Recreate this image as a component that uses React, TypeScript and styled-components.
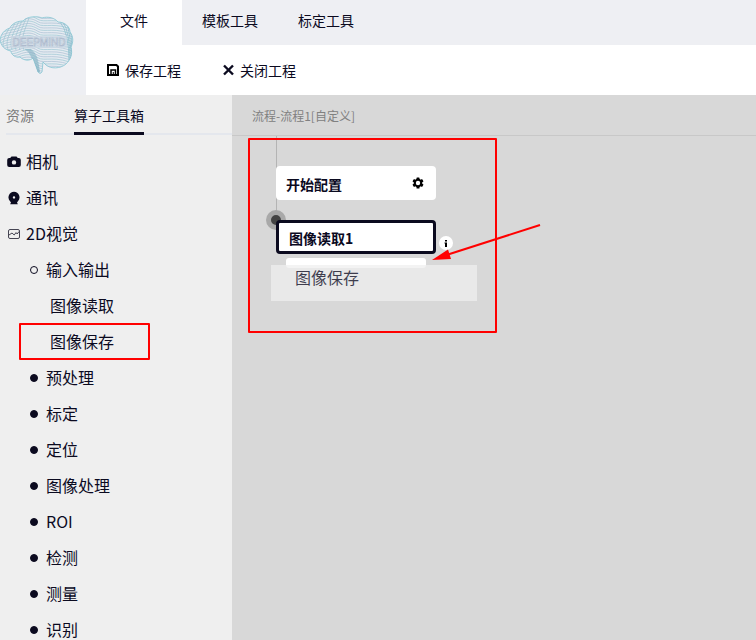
import React from "react";
import styled, { createGlobalStyle, css } from "styled-components";

const ink = "#0b0a1f";

const GlobalStyle = createGlobalStyle`
  *, *::before, *::after { box-sizing: border-box; }
  html, body, #root { height: 100%; }
  body {
    margin: 0;
    overflow: hidden;
    color: ${ink};
    font-family: "Noto Sans CJK SC", sans-serif;
    font-size: 14px;
  }
  button {
    margin: 0;
    padding: 0;
    border: 0;
    background: none;
    color: inherit;
    font: inherit;
    cursor: pointer;
  }
  ul { margin: 0; padding: 0; list-style: none; }
  svg { display: block; flex: none; }
`;

const Page = styled.div`
  display: flex;
  flex-direction: column;
  height: 100vh;
  background: #fff;
`;

const Header = styled.header`
  display: flex;
  flex: none;
`;

const LogoBox = styled.div`
  flex: none;
  width: 86px;
  background: #eeeff3;
`;

const HeaderMain = styled.div`
  flex: 1;
`;

const MenuTabs = styled.nav`
  display: flex;
  background: #eeeff3;
`;

const MenuTab = styled.button<{ $active?: boolean }>`
  width: 96px;
  height: 45px;
  padding-bottom: 6px;
  background: ${(p) => (p.$active ? "#fff" : "transparent")};
`;

const Toolbar = styled.div`
  display: flex;
  gap: 40px;
  height: 50px;
  padding: 0 20px;
`;

const ToolButton = styled.button`
  display: flex;
  align-items: center;
  gap: 5px;
`;

const Body = styled.div`
  display: flex;
  flex: 1;
  min-height: 0;
`;

const Sidebar = styled.aside`
  flex: none;
  width: 232px;
  overflow: hidden;
  background: #efefef;
`;

const SideTabs = styled.div`
  display: flex;
  gap: 40px;
  height: 40px;
  margin-left: 6px;
  box-shadow: inset 0 -2px #e4e7ed;
`;

const SideTab = styled.button<{ $active?: boolean }>`
  height: 40px;
  padding-top: 2px;
  color: ${(p) => (p.$active ? ink : "#7c7c7c")};
  border-bottom: 3px solid ${(p) => (p.$active ? ink : "transparent")};
`;

const Tree = styled.ul`
  padding-top: 9px;
`;

const TreeItem = styled.li`
  position: relative;
`;

const levels = [8, 30, 50];

const TreeButton = styled.button<{ $level: number }>`
  display: flex;
  align-items: center;
  width: 100%;
  height: 36px;
  gap: ${(p) => (p.$level === 0 ? 6 : 8)}px;
  padding-left: ${(p) => levels[p.$level]}px;
  font-size: 16px;
  line-height: 20px;
  text-align: left;
`;

const TreeLabel = styled.span`
  padding-bottom: 2px;
`;

const IconSlot = styled.span`
  display: flex;
  justify-content: center;
  width: 12px;
`;

const Dot = styled.span<{ $open?: boolean }>`
  width: 8px;
  height: 8px;
  border: 1px solid ${ink};
  border-radius: 50%;
  background: ${(p) => (p.$open ? "transparent" : ink)};
`;

const mark = css`
  position: absolute;
  border: 2px solid #f00;
  border-radius: 1px;
  pointer-events: none;
`;

const ItemMark = styled.span`
  ${mark}
  left: 19px;
  top: -1px;
  width: 131px;
  height: 37px;
`;

const Workspace = styled.main`
  display: flex;
  flex: 1;
  flex-direction: column;
  background: #d8d8d8;
`;

const FlowTitle = styled.div`
  height: 41px;
  padding: 0 20px;
  border-bottom: 1px solid #c8c8c8;
  color: #808080;
  font-size: 12px;
  line-height: 42px;
`;

const Canvas = styled.div`
  position: relative;
  flex: 1;
  overflow: hidden;
`;

const Wire = styled.div`
  position: absolute;
  left: 44px;
  top: 0;
  width: 1px;
  height: 84px;
  background: #b4b4b4;
`;

const Port = styled.div`
  position: absolute;
  left: 34px;
  top: 74px;
  width: 20px;
  height: 20px;
  border: 5px solid #a9a9a9;
  border-radius: 50%;
  background: #444;
`;

const FlowNode = styled.button<{ $top: number; $selected?: boolean }>`
  position: absolute;
  left: 44px;
  top: ${(p) => p.$top}px;
  display: flex;
  align-items: center;
  justify-content: space-between;
  width: 160px;
  height: 34px;
  padding: 0 12px 0 10px;
  border: ${(p) => (p.$selected ? `3px solid ${ink}` : "0")};
  border-radius: 4px;
  background: #fff;
  font-weight: 700;
`;

const NodeLabel = styled.span`
  padding-top: 2px;
`;

const InfoBadge = styled.button`
  position: absolute;
  left: 207px;
  top: 100px;
  display: flex;
  align-items: center;
  justify-content: center;
  width: 14px;
  height: 14px;
  border-radius: 50%;
  background: #fff;
`;

const DropSlot = styled.div`
  position: absolute;
  left: 54px;
  top: 122px;
  width: 140px;
  height: 10px;
  border-radius: 3px;
  background: #fff;
`;

const DragGhost = styled.div`
  position: absolute;
  left: 39px;
  top: 129px;
  width: 206px;
  height: 36px;
  padding-left: 24px;
  background: #efefef;
  font-size: 16px;
  line-height: 24px;
  opacity: 0.75;
`;

const FlowMark = styled.div`
  ${mark}
  left: 16px;
  top: 2px;
  width: 249px;
  height: 195px;
`;

const Arrow = styled.svg`
  position: absolute;
  left: 200px;
  top: 86px;
`;

const brain =
  "M0 40C1 34 4 30 10 28C12 23 18 21 23 21C27 16 38 16 42 18C48 16 55 18 58 22C65 22 70 27 70 32C74 37 73 43 71 47C73 55 70 60 66 64C60 69 51 69 46 65L43 62L42 72Q40 75 38 72L33 58C30 61 24 61 20 57C16 58 11 55 11 51C5 50 1 46 0 40Z";

function Logo() {
  const rows = Array.from({ length: 25 }, (_, i) => 15 + i * 2.4);
  const folds = Array.from({ length: 6 }, (_, i) => i);
  return (
    <svg width="86" height="95" viewBox="0 0 86 95" fill="none" role="img" aria-label="DEEPMIND">
      <defs>
        <clipPath id="brain">
          <path d={brain} />
        </clipPath>
      </defs>
      <path d={brain} fill="#dce8ef" fillOpacity="0.5" stroke="#8cc9d6" strokeWidth="0.9" />
      <g clipPath="url(#brain)" strokeWidth="0.7">
        {rows.map((y, i) => (
          <path
            key={y}
            stroke={i % 2 ? "#9cc6d3" : "#a9bfd2"}
            d={`M-2 ${y + 8}C6 ${y + 2} 12 ${y + 4} 19 ${y + 1}S32 ${y - 2} 38 ${y + 2}S56 ${y - 1} 76 ${y + 9}`}
          />
        ))}
        {folds.map((i) => (
          <path key={i} stroke="#9dc4d2" d={`M${4 + i * 4} 50C${i * 4} 38 ${10 + i * 3} 30 ${14 + i * 3} 18`} />
        ))}
        {folds.map((i) => (
          <path key={i} stroke="#86b4c6" d={`M${25 + i} 49C${32 + i} 53 ${33 + i} 62 ${37 + i * 0.5} 72`} />
        ))}
        {folds.slice(0, 4).map((i) => (
          <path key={i} stroke="#84bccb" d={`M${60 + i * 3} 22Q${69 + i} 32 ${69 + i} 62`} />
        ))}
      </g>
      <rect x="11" y="36" width="56" height="12" fill="#cbd7e3" fillOpacity="0.75" />
      <text
        x="39"
        y="46"
        textAnchor="middle"
        fill="#e9edf3"
        stroke="#a5b3c8"
        strokeWidth="0.5"
        fontFamily="Liberation Sans, sans-serif"
        fontSize="10"
      >
        DEEPMIND
      </text>
    </svg>
  );
}

const SaveIcon = () => (
  <svg width="14" height="14" viewBox="0 0 14 14" fill="none" stroke="#000" strokeWidth="2">
    <path d="M2 2h8.500L12 3.500V12H2z" />
    <path d="M5 12V7h4.500v5" strokeWidth="1.500" />
    <path d="M7.300 9v3" strokeWidth="1" />
  </svg>
);

const CloseIcon = () => (
  <svg width="14" height="14" viewBox="0 0 14 14" stroke={ink} strokeWidth="2.4">
    <path d="M3 2.500l9 9M12 2.500l-9 9" />
  </svg>
);

const CameraIcon = () => (
  <svg width="14" height="12" viewBox="0 0 14 12" fill={ink}>
    <path
      fillRule="evenodd"
      d="M4.500.5h5L10.800 2h1a2 2 0 0 1 2 2v5a2 2 0 0 1-2 2H2.200a2 2 0 0 1-2-2V4a2 2 0 0 1 2-2h1zM7 4.200a2.200 2.200 0 1 0 0 4.400 2.200 2.200 0 0 0 0-4.400z"
    />
  </svg>
);

const WebcamIcon = () => (
  <svg width="12" height="14" viewBox="0 0 12 14" fill={ink}>
    <path
      fillRule="evenodd"
      d="M6 .8a5.600 5.600 0 0 1 3.800 9.600l-.8.8.8 2H2.200l.8-2-.8-.8A5.600 5.600 0 0 1 6 .8zm0 4.400a1.200 1.200 0 1 0 0 2.400 1.200 1.200 0 0 0 0-2.400z"
    />
  </svg>
);

const PictureIcon = () => (
  <svg width="12" height="12" viewBox="0 0 12 12" fill="none" stroke="#454452">
    <rect x=".5" y="1.500" width="11" height="9" rx="1.500" />
    <path d="M1 7l3-2 2.200 2L8 4.600 9.200 6 11 3.500" />
  </svg>
);

const GearIcon = () => (
  <svg width="12" height="12" viewBox="0 0 12 12">
    <g fill="#000">
      <rect x="4.500" y="0.400" width="3" height="11.200" rx=".6" />
      <rect x="4.500" y="0.400" width="3" height="11.200" rx=".6" transform="rotate(60 6 6)" />
      <rect x="4.500" y="0.400" width="3" height="11.200" rx=".6" transform="rotate(120 6 6)" />
      <circle cx="6" cy="6" r="4.300" />
    </g>
    <circle cx="6" cy="6" r="2.200" fill="#fff" />
  </svg>
);

const InfoIcon = () => (
  <svg width="4" height="8" viewBox="0 0 4 8" fill="#000">
    <path d="M1 1h2v1.500H1zM.5 3.500H3V8H1V4.500H.5z" />
  </svg>
);

type Item = { label: string; level: number; icon?: React.ReactNode; marked?: boolean };

const items: Item[] = [
  { label: "相机", level: 0, icon: <CameraIcon /> },
  { label: "通讯", level: 0, icon: <WebcamIcon /> },
  { label: "2D视觉", level: 0, icon: <PictureIcon /> },
  { label: "输入输出", level: 1, icon: <Dot $open /> },
  { label: "图像读取", level: 2 },
  { label: "图像保存", level: 2, marked: true },
  ...["预处理", "标定", "定位", "图像处理", "ROI", "检测", "测量", "识别"].map((label) => ({
    label,
    level: 1,
    icon: <Dot />,
  })),
];

export default function App() {
  return (
    <Page>
      <GlobalStyle />
      <Header>
        <LogoBox>
          <Logo />
        </LogoBox>
        <HeaderMain>
          <MenuTabs>
            <MenuTab $active>文件</MenuTab>
            <MenuTab>模板工具</MenuTab>
            <MenuTab>标定工具</MenuTab>
          </MenuTabs>
          <Toolbar>
            <ToolButton>
              <SaveIcon />
              保存工程
            </ToolButton>
            <ToolButton>
              <CloseIcon />
              关闭工程
            </ToolButton>
          </Toolbar>
        </HeaderMain>
      </Header>
      <Body>
        <Sidebar>
          <SideTabs>
            <SideTab>资源</SideTab>
            <SideTab $active>算子工具箱</SideTab>
          </SideTabs>
          <Tree>
            {items.map((item) => (
              <TreeItem key={item.label}>
                <TreeButton $level={item.level}>
                  {item.level === 0 ? <IconSlot>{item.icon}</IconSlot> : item.icon}
                  <TreeLabel>{item.label}</TreeLabel>
                </TreeButton>
                {item.marked && <ItemMark />}
              </TreeItem>
            ))}
          </Tree>
        </Sidebar>
        <Workspace>
          <FlowTitle>流程-流程1[自定义]</FlowTitle>
          <Canvas>
            <Wire />
            <Port />
            <FlowNode $top={30}>
              <NodeLabel>开始配置</NodeLabel>
              <GearIcon />
            </FlowNode>
            <FlowNode $top={84} $selected>
              <NodeLabel>图像读取1</NodeLabel>
            </FlowNode>
            <InfoBadge aria-label="信息">
              <InfoIcon />
            </InfoBadge>
            <DropSlot />
            <DragGhost>图像保存</DragGhost>
            <FlowMark />
            <Arrow width="110" height="42" viewBox="0 0 110 42">
              <path d="M108 3L16 32.500" stroke="#f00" strokeWidth="2" />
              <path d="M0 38L16 27.500L19 37z" fill="#f00" />
            </Arrow>
          </Canvas>
        </Workspace>
      </Body>
    </Page>
  );
}
